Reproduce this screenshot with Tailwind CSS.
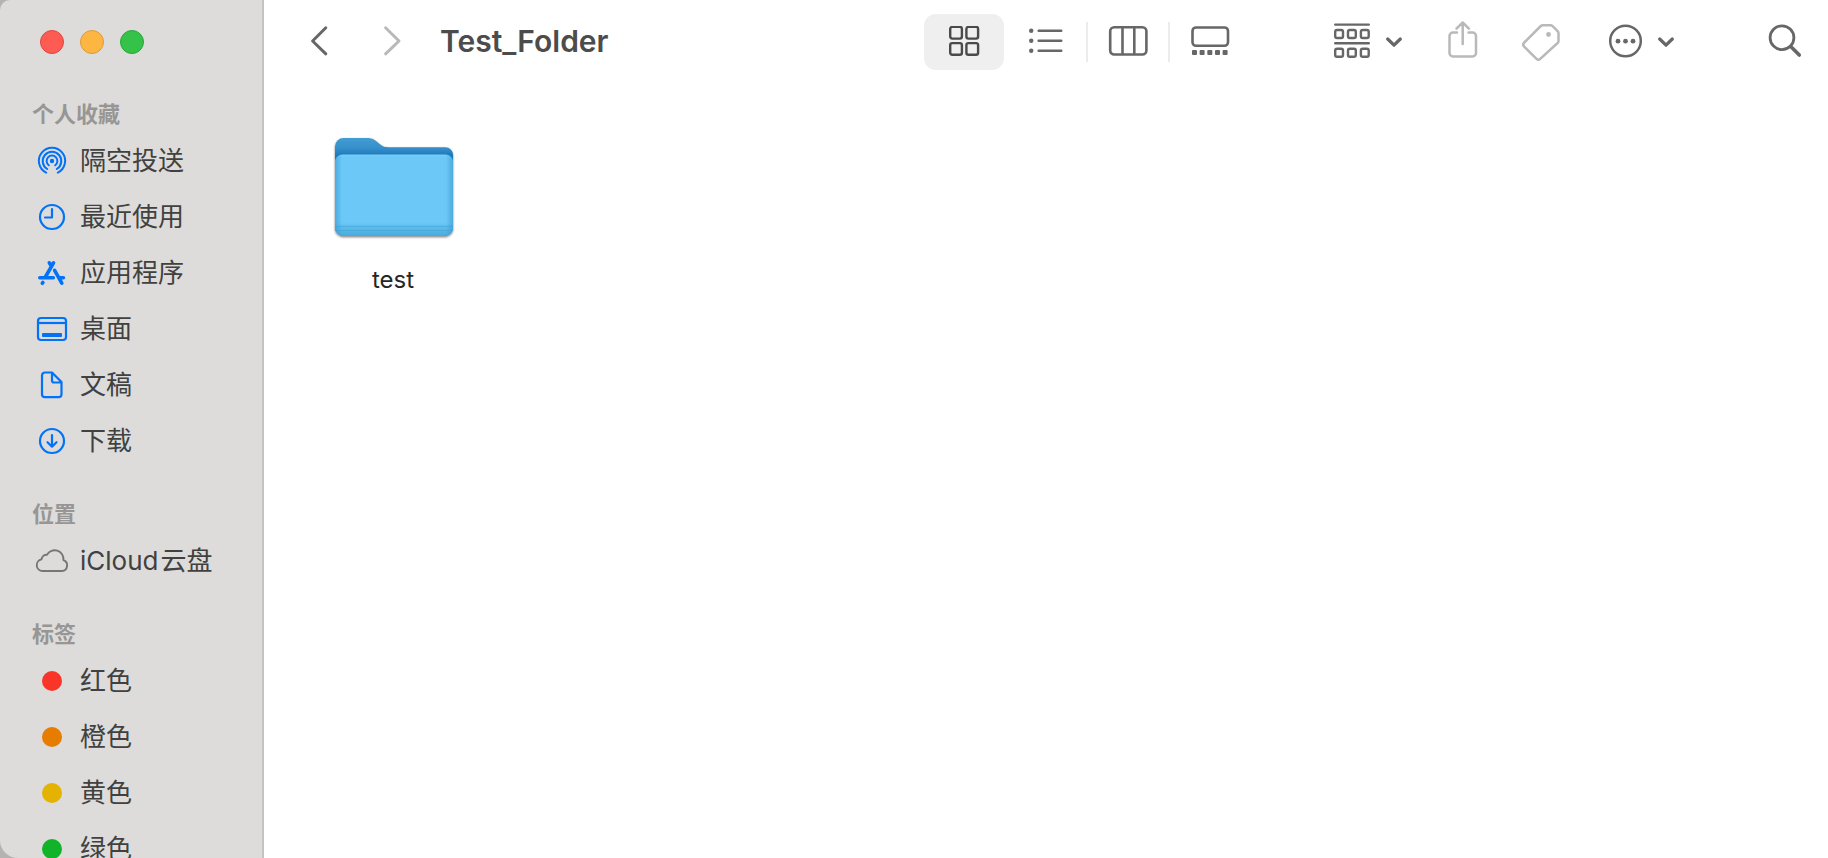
<!DOCTYPE html>
<html lang="zh-CN">
<head>
<meta charset="utf-8">
<meta name="viewport" content="width=device-width, initial-scale=1">
<title>Test_Folder</title>
<script src="https://cdn.jsdelivr.net/npm/@tailwindcss/browser@4"></script>
</head>
<body class="flex min-h-screen bg-white font-[Inter,'Noto_Sans_CJK_SC',sans-serif] text-[#414140]">
<div class="flex h-screen w-full overflow-hidden bg-[#b4b3b2]">
  <aside class="flex w-[264px] shrink-0 flex-col overflow-hidden rounded-tl-[10px] rounded-bl-[18px] border-r-2 border-[#c4c3c2] bg-[#dddcda]">
    <div class="flex h-[84px] shrink-0 items-center gap-4 pl-10">
      <button aria-label="关闭" class="size-6 rounded-full border border-[#e2443f] bg-[#fe5b52]"></button>
      <button aria-label="最小化" class="size-6 rounded-full border border-[#dd9a3a] bg-[#fdb641]"></button>
      <button aria-label="缩放" class="size-6 rounded-full border border-[#27a838] bg-[#34c249]"></button>
    </div>
    <nav class="flex flex-col gap-[26px] pt-[11px] text-[26px] leading-8">
      <section>
        <h2 class="flex h-[38px] items-center pl-8 text-[22px] font-bold text-[#979694]">个人收藏</h2>
        <ul>
          <li><a href="#" class="flex h-14 items-center gap-3 pl-9">
            <svg class="size-8 shrink-0" viewBox="0 0 32 32" fill="none" stroke="#0272f7" stroke-width="2" stroke-linecap="round"><circle cx="16" cy="16" r="2.200" fill="#0272f7" stroke="none"/><path d="M12.800 20.300a5.400 5.400 0 1 1 6.400 0M11.200 24a9.300 9.300 0 1 1 9.600 0M10.200 27.600a13.100 13.100 0 1 1 11.600 0"/></svg>
            <span>隔空投送</span></a></li>
          <li><a href="#" class="flex h-14 items-center gap-3 pl-9">
            <svg class="size-8 shrink-0" viewBox="0 0 32 32" fill="none" stroke="#0272f7" stroke-width="2.200" stroke-linecap="round" stroke-linejoin="round"><circle cx="16" cy="16" r="12"/><path d="M16 8v8.500H9"/></svg>
            <span>最近使用</span></a></li>
          <li><a href="#" class="flex h-14 items-center gap-3 pl-9">
            <svg class="size-8 shrink-0" viewBox="0 0 32 32" fill="none" stroke="#0272f7" stroke-width="3.600" stroke-linecap="round"><path d="M17.500 5.800L9.400 20M6.900 25.400l-.6.900M13.300 5.800l2 3.200M18.600 13.300l7.200 12.900M3.800 20.700h13.500M24 20.700h3.400"/></svg>
            <span>应用程序</span></a></li>
          <li><a href="#" class="flex h-14 items-center gap-3 pl-9">
            <svg class="size-8 shrink-0" viewBox="0 0 32 32" fill="none" stroke="#0272f7" stroke-width="2.200"><rect x="2" y="5" width="28" height="22" rx="3"/><path d="M2 10h28"/><rect x="6" y="20" width="20" height="4" rx="1" fill="#0272f7" stroke="none"/></svg>
            <span>桌面</span></a></li>
          <li><a href="#" class="flex h-14 items-center gap-3 pl-9">
            <svg class="size-8 shrink-0" viewBox="0 0 32 32" fill="none" stroke="#0272f7" stroke-width="2.200" stroke-linejoin="round"><path d="M9 3.500h7L25.500 13v12.200a3 3 0 0 1-3 3H9a3 3 0 0 1-3-3V6.500a3 3 0 0 1 3-3zM16 3.500v8a2 2 0 0 0 2 2h7.500"/></svg>
            <span>文稿</span></a></li>
          <li><a href="#" class="flex h-14 items-center gap-3 pl-9">
            <svg class="size-8 shrink-0" viewBox="0 0 32 32" fill="none" stroke="#0272f7" stroke-width="2.200" stroke-linecap="round" stroke-linejoin="round"><circle cx="16" cy="16" r="12"/><path d="M16 10v11.500M11.500 17.200l4.500 4.500 4.500-4.500"/></svg>
            <span>下载</span></a></li>
        </ul>
      </section>
      <section>
        <h2 class="flex h-[38px] items-center pl-8 text-[22px] font-bold text-[#979694]">位置</h2>
        <ul>
          <li><a href="#" class="flex h-14 items-center gap-3 pl-9">
            <svg class="size-8 shrink-0 overflow-visible" viewBox="0 0 32 32" fill="none" stroke="#777674" stroke-width="1.900" stroke-linejoin="round"><path d="M6.500 26A5.900 5.900 0 0 1 5.600 14.300 5 5 0 0 1 11 9.700 8.800 8.800 0 0 1 27.400 15 5.700 5.700 0 0 1 26 26z"/></svg>
            <span class="flex gap-0.5"><span>iCloud</span><span>云盘</span></span></a></li>
        </ul>
      </section>
      <section>
        <h2 class="flex h-[38px] items-center pl-8 text-[22px] font-bold text-[#979694]">标签</h2>
        <ul>
          <li><a href="#" class="flex h-14 items-center gap-[18px] pl-[42px]"><span class="size-5 rounded-full bg-[#f93428]"></span><span>红色</span></a></li>
          <li><a href="#" class="flex h-14 items-center gap-[18px] pl-[42px]"><span class="size-5 rounded-full bg-[#e67c00]"></span><span>橙色</span></a></li>
          <li><a href="#" class="flex h-14 items-center gap-[18px] pl-[42px]"><span class="size-5 rounded-full bg-[#e4b200]"></span><span>黄色</span></a></li>
          <li><a href="#" class="flex h-14 items-center gap-[18px] pl-[42px]"><span class="size-5 rounded-full bg-[#11b428]"></span><span>绿色</span></a></li>
        </ul>
      </section>
    </nav>
  </aside>

  <main class="flex min-w-0 flex-1 flex-col bg-white">
    <header class="flex h-[82px] shrink-0 items-center pl-11 pr-[26px] text-[#676767]">
      <button aria-label="后退" class="mr-[49px]"><svg class="h-8 w-6" viewBox="0 0 24 32" fill="none" stroke="#676767" stroke-width="3" stroke-linecap="round" stroke-linejoin="round"><path d="M17.800 2.800L4.600 16l13.200 12.800"/></svg></button>
      <button aria-label="前进" class="mr-[35px]" disabled><svg class="h-8 w-6" viewBox="0 0 24 32" fill="none" stroke="#b9b9b9" stroke-width="3" stroke-linecap="round" stroke-linejoin="round"><path d="M4.600 2.800L18 16 4.600 28.800"/></svg></button>
      <h1 class="text-[30px] leading-9 font-semibold text-[#4c4c4c]">Test_Folder</h1>

      <div class="ml-auto flex items-center pt-0.5" role="group" aria-label="显示方式">
        <button aria-label="图标" class="flex h-14 w-20 items-center justify-center rounded-xl bg-[#efefef]"><svg class="size-8" viewBox="0 0 32 32" fill="none" stroke="#4a4a4a" stroke-width="2.400"><rect x="2.200" y=".9" width="11.700" height="11.700" rx="2"/><rect x="18.400" y=".9" width="11.700" height="11.700" rx="2"/><rect x="2.200" y="17.100" width="11.700" height="11.700" rx="2"/><rect x="18.400" y="17.100" width="11.700" height="11.700" rx="2"/></svg></button>
        <button aria-label="列表" class="flex h-14 w-[82px] items-center justify-center"><svg class="h-8 w-9" viewBox="0 0 36 32" fill="none" stroke="#676767" stroke-width="2.600" stroke-linecap="round"><path d="M11.700 4.800h22.500M11.700 14.800h22.500M11.700 24.800h22.500"/><g fill="#676767" stroke="none"><circle cx="4.200" cy="4.800" r="2.200"/><circle cx="4.200" cy="14.800" r="2.200"/><circle cx="4.200" cy="24.800" r="2.200"/></g></svg></button>
        <span class="h-10 w-0.5 bg-[#ececec]"></span>
        <button aria-label="分栏" class="flex h-14 w-20 items-center justify-center"><svg class="h-8 w-10" viewBox="0 0 40 32" fill="none" stroke="#676767" stroke-width="2.600"><rect x="2.200" y="1.300" width="36.200" height="27.200" rx="4"/><path d="M14.500 1.200v27.500M26.300 1.200v27.500"/></svg></button>
        <span class="h-10 w-0.5 bg-[#ececec]"></span>
        <button aria-label="画廊" class="flex h-14 w-20 items-center justify-center"><svg class="h-8 w-10" viewBox="0 0 40 32"><rect x="2.500" y="1.500" width="35.500" height="18.300" rx="3.500" fill="none" stroke="#676767" stroke-width="2.600"/><g fill="#676767"><rect x="2" y="24" width="5" height="5" rx="1"/><rect x="9.600" y="24" width="5" height="5" rx="1"/><rect x="17.300" y="24" width="5" height="5" rx="1"/><rect x="25" y="24" width="5" height="5" rx="1"/><rect x="32.600" y="24" width="5" height="5" rx="1"/></g></svg></button>
      </div>

      <button aria-label="分组" class="ml-[84px] flex items-center gap-4">
        <svg class="size-9" viewBox="0 0 36 36" fill="none" stroke="#676767" stroke-width="2.400" stroke-linecap="round"><path d="M1.200 1.600h33.600M1.200 20.300h33.600"/><rect x="1.200" y="7" width="7.800" height="8" rx="1.800"/><rect x="14" y="7" width="7.800" height="8" rx="1.800"/><rect x="26.900" y="7" width="7.800" height="8" rx="1.800"/><rect x="1.200" y="25.700" width="7.800" height="8" rx="1.800"/><rect x="14" y="25.700" width="7.800" height="8" rx="1.800"/><rect x="26.900" y="25.700" width="7.800" height="8" rx="1.800"/></svg>
        <svg class="size-4" viewBox="0 0 16 16" fill="none" stroke="#676767" stroke-width="3.200" stroke-linecap="round" stroke-linejoin="round"><path d="M1.700 6L8 12.200 14.300 6"/></svg>
      </button>
      <button aria-label="共享" class="ml-[46px]" disabled><svg class="h-10 w-[30px]" viewBox="0 0 30 40" fill="none" stroke="#b9b9b9" stroke-width="2.500" stroke-linecap="round" stroke-linejoin="round"><path d="M9 11.500H5A3.500 3.500 0 0 0 1.500 15v17A3.500 3.500 0 0 0 5 35.500h19.500A3.500 3.500 0 0 0 28 32V15a3.500 3.500 0 0 0-3.500-3.500h-4M14.700 23V1.500M8.500 7.600L14.700 1.500l6.200 6.100"/></svg></button>
      <button aria-label="标签" class="ml-11" disabled><svg class="h-10 w-[38px]" viewBox="0 0 38 40" fill="none" stroke="#b9b9b9" stroke-width="2.500" stroke-linejoin="round"><path d="M2.200 21.500L18.800 5a3 3 0 0 1 2-.8h7.700a3 3 0 0 1 2.100.9l5 5a3 3 0 0 1 .9 2.100v7.700a3 3 0 0 1-.9 2.100L18.500 37.700a3 3 0 0 1-4.200 0L2.200 25.700a3 3 0 0 1 0-4.200z"/><circle cx="26.500" cy="13.500" r="2.400" fill="#b9b9b9" stroke="none"/></svg></button>
      <button aria-label="更多" class="ml-12 flex items-center gap-4">
        <svg class="size-[34px]" viewBox="0 0 34 34"><circle cx="17.500" cy="17" r="15.300" fill="none" stroke="#676767" stroke-width="2.500"/><g fill="#676767"><circle cx="10" cy="17.200" r="2.400"/><circle cx="17.500" cy="17.200" r="2.400"/><circle cx="25" cy="17.200" r="2.400"/></g></svg>
        <svg class="size-4" viewBox="0 0 16 16" fill="none" stroke="#676767" stroke-width="3.200" stroke-linecap="round" stroke-linejoin="round"><path d="M1.700 6L8 12.200 14.300 6"/></svg>
      </button>
      <button aria-label="搜索" class="ml-[94px]"><svg class="size-[34px]" viewBox="0 0 34 34" fill="none" stroke="#676767" stroke-linecap="round"><circle cx="14" cy="13.700" r="11.900" stroke-width="2.800"/><path d="M23 22.800l8.300 8.300" stroke-width="3.600"/></svg></button>
    </header>

    <div class="flex px-14 pt-[52px]">
      <button class="flex w-[148px] flex-col items-center gap-6">
        <svg class="h-[106px] w-32" viewBox="0 0 128 106">
          <defs>
            <linearGradient id="back" x1="0" y1="0" x2="0" y2="1"><stop offset="0" stop-color="#429dd2"/><stop offset=".1" stop-color="#3690ca"/><stop offset=".18" stop-color="#1b79bb"/></linearGradient>
            <linearGradient id="front" x1="0" y1="0" x2="0" y2="1"><stop offset="0" stop-color="#7acbf8"/><stop offset=".04" stop-color="#6cc8f7"/><stop offset=".84" stop-color="#6cc8f7"/><stop offset=".87" stop-color="#62bfee"/><stop offset="1" stop-color="#49abde"/></linearGradient>
            <linearGradient id="edge"><stop offset="0" stop-color="#3698d0" stop-opacity=".6"/><stop offset=".06" stop-color="#3698d0" stop-opacity="0"/><stop offset=".94" stop-color="#3698d0" stop-opacity="0"/><stop offset="1" stop-color="#3698d0" stop-opacity=".6"/></linearGradient>
            <filter id="shadow" x="-10%" y="-10%" width="120%" height="125%"><feDropShadow dx="0" dy="1.200" stdDeviation="1" flood-opacity=".5"/></filter>
          </defs>
          <g filter="url(#shadow)">
            <path fill="url(#back)" d="M5 12.500A8.500 8.500 0 0 1 13.500 4H37c4.500 0 6.500 1 10 3.800l3 2.500c3 2.400 5 3 9 3h56.500A7.500 7.500 0 0 1 123 20.800V93.500a8.500 8.500 0 0 1-8.500 8.500h-101A8.500 8.500 0 0 1 5 93.500z"/>
            <path fill="url(#front)" d="M5 28a7.500 7.500 0 0 1 7.500-7.500h103A7.500 7.500 0 0 1 123 28v65.500a8.500 8.500 0 0 1-8.500 8.500h-101A8.500 8.500 0 0 1 5 93.500z"/>
          </g>
          <path fill="url(#edge)" d="M5 28a7.500 7.500 0 0 1 7.500-7.500h103A7.500 7.500 0 0 1 123 28v65.500a8.500 8.500 0 0 1-8.500 8.500h-101A8.500 8.500 0 0 1 5 93.500z"/>
          <path stroke="#43a3d8" stroke-opacity=".6" d="M5 92.500h118M5 96.500h118"/>
        </svg>
        <span class="pr-0.5 text-2xl text-[#262626]">test</span>
      </button>
    </div>
  </main>
</div>
</body>
</html>
